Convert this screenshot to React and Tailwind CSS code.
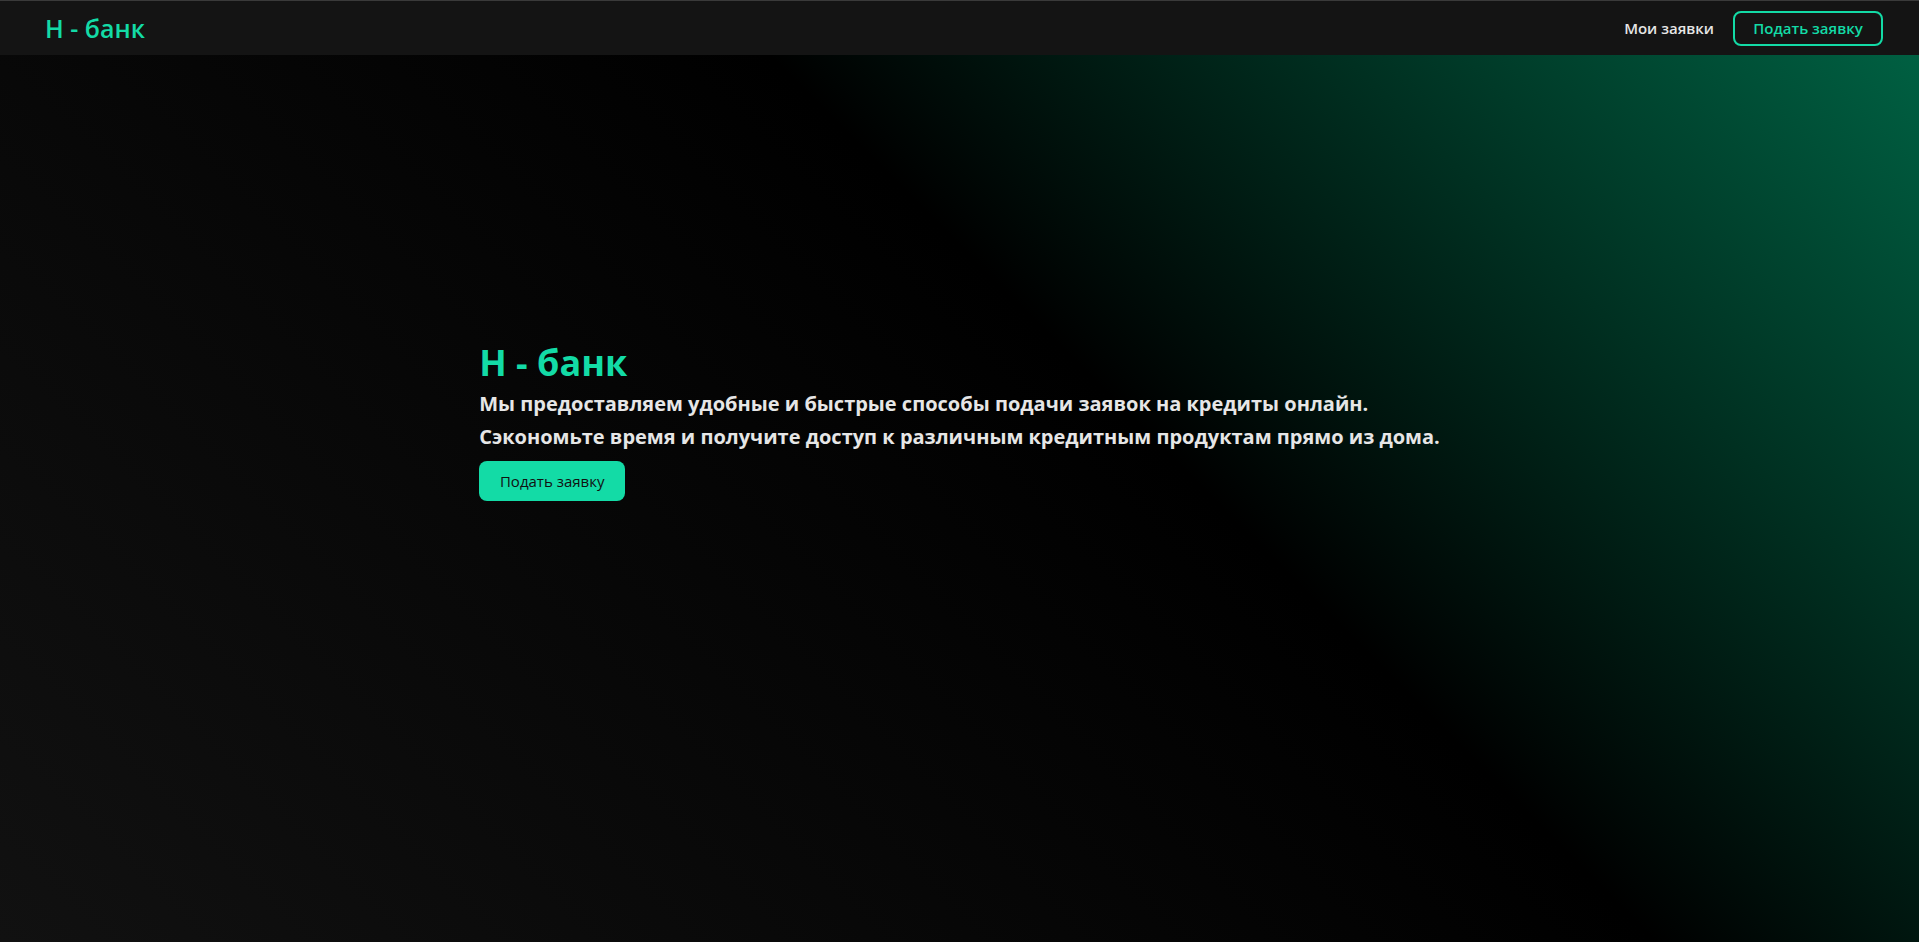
import React from 'react';

export default function App() {
  return (
    <div
      className="min-h-screen flex flex-col bg-black text-[#e6e6e6]"
      style={{ fontFamily: '"Open Sans", "Noto Sans", sans-serif' }}
    >
      <header className="h-[55px] shrink-0 flex items-center justify-between bg-[#141414] border-t border-[#3a3a3a] pl-[45px] pr-[36px]">
        <a href="#" className="text-[25px] font-semibold text-[#13dba6] leading-none">
          H - банк
        </a>
        <nav className="flex items-center gap-[19px]">
          <a href="#" className="text-[15px] font-semibold text-[#e6e6e6]">
            Мои заявки
          </a>
          <button className="h-[35px] w-[150px] rounded-[8px] border-2 border-[#13dba6] text-[15px] font-semibold text-[#13dba6]">
            Подать заявку
          </button>
        </nav>
      </header>

      <main className="flex-1 flex justify-center bg-[linear-gradient(45deg,#111111_0%,#000000_59%,#006042_100%)]">
        <div className="w-fit pt-[284px]">
          <h1 className="text-[36px] font-bold leading-[48px] text-[#13dba6]">H - банк</h1>
          <p className="text-[20px] font-bold leading-[33px]">
            Мы предоставляем удобные и быстрые способы подачи заявок на кредиты онлайн.
          </p>
          <p className="text-[20px] font-bold leading-[33px]">
            Сэкономьте время и получите доступ к различным кредитным продуктам прямо из дома.
          </p>
          <button className="mt-[8px] h-[40px] w-[146px] rounded-[8px] bg-[#13dba6] text-[15px] text-[#111]">
            Подать заявку
          </button>
        </div>
      </main>
    </div>
  );
}
